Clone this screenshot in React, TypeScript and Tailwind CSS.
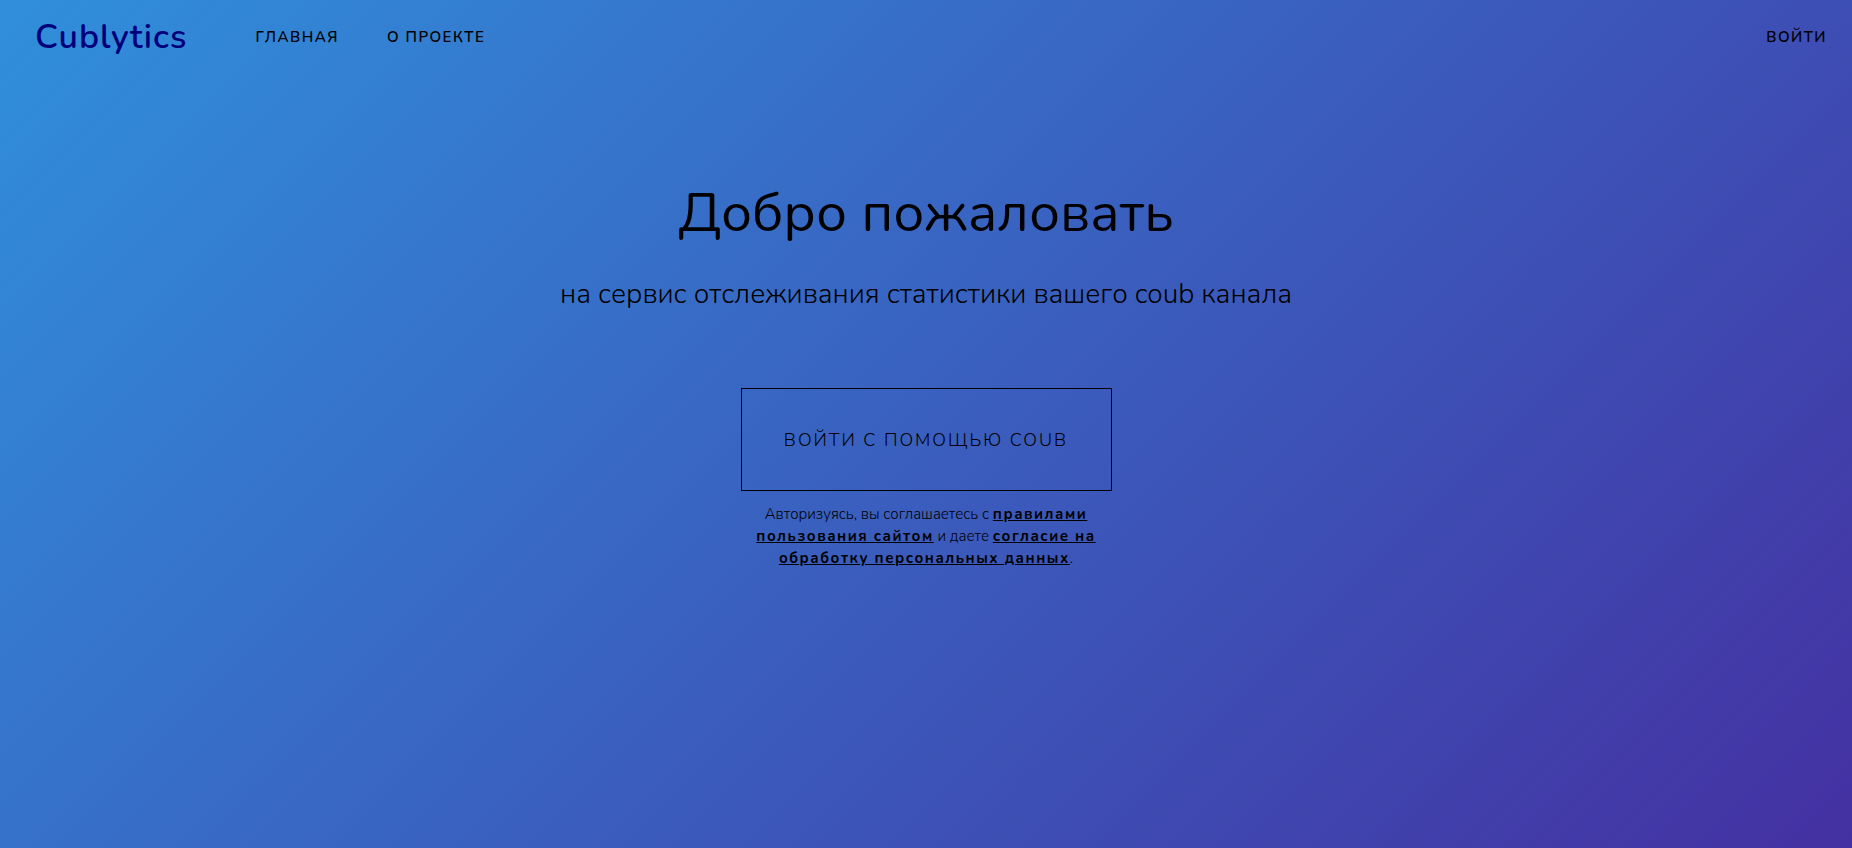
export default function App() {
  return (
    <div className="flex min-h-screen flex-col bg-[linear-gradient(135deg,#308fdb,#4430a2)] font-['Nunito','Open_Sans',sans-serif] text-black">
      <header className="flex h-[74px] items-center justify-between pr-[25px] pl-[35px]">
        <div className="flex items-center gap-[68px]">
          <a href="#" className="text-[34px] leading-[44px] font-semibold tracking-[1px] text-[#00007a]">
            Cublytics
          </a>
          <nav className="flex items-center gap-12 text-[15px] font-semibold tracking-widest uppercase">
            <a href="#">Главная</a>
            <a href="#about">О проекте</a>
          </nav>
        </div>
        <a href="#login" className="text-[15px] font-semibold tracking-widest uppercase">
          Войти
        </a>
      </header>

      <main className="flex flex-col items-center px-6 pt-[101px] text-center">
        <h1 className="text-[55px] leading-[76px] font-normal">Добро пожаловать</h1>
        <p className="mt-[25px] text-[28px] leading-9 font-light">
          на сервис отслеживания статистики вашего coub канала
        </p>
        <div className="mt-[76px] w-full max-w-[371px]">
          <button
            type="button"
            className="h-[103px] w-full border border-black pt-0.5 text-[18px] font-light tracking-[2px] uppercase"
          >
            Войти с помощью coub
          </button>
          <p className="mt-3 px-3 text-[15px] leading-[22px] font-light">
            Авторизуясь, вы соглашаетесь с{" "}
            <a href="#rules" className="font-bold tracking-widest underline">
              правилами пользования сайтом
            </a>{" "}
            и даете{" "}
            <a href="#privacy" className="font-bold tracking-widest underline">
              согласие на обработку персональных данных
            </a>
            .
          </p>
        </div>
      </main>
    </div>
  );
}
